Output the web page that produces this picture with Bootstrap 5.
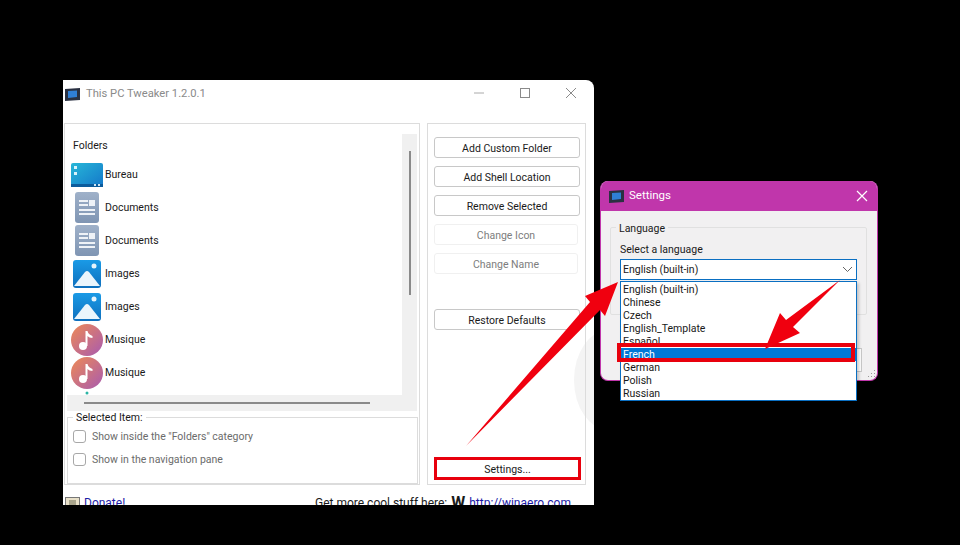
<!DOCTYPE html>
<html lang="en">
<head>
<meta charset="UTF-8">
<title>This PC Tweaker</title>
<link href="https://cdn.jsdelivr.net/npm/bootstrap@5.3.3/dist/css/bootstrap.min.css" rel="stylesheet">
<style>
body { background: #000; width: 960px; height: 545px; overflow: hidden; margin: 0; font-family: Roboto, "Liberation Sans", sans-serif; font-size: 10.5px; color: #1a1a1a; }
.win-main { position: absolute; left: 63px; top: 80px; width: 531px; height: 425px; background: #fff; overflow: hidden; border-top-right-radius: 8px; }
.win-title { height: 43px; padding: 7px 17px 0 2px; color: #8a8a8a; font-size: 11.2px; }
.title-left { gap: 6px; height: 14px; }
.win-controls { gap: 34px; height: 14px; margin-top: -1px; }
.left-box { width: 356px; height: 362px; margin-left: 1px; border: 1px solid #dcdcdc; padding-left: 2px; padding-right: 2px; }
.right-box { width: 159px; height: 362px; margin-left: 7px; border: 1px solid #dcdcdc; padding: 13px 6px 0; }
.list-wrap { height: 287px; position: relative; }
.list-white { width: 335px; height: 271px; padding: 14px 0 0 3px; overflow: hidden; }
.folder-head { height: 20px; padding-left: 3px; line-height: 15px; }
.folder-row { height: 33px; gap: 1px; flex: none; padding-top: 1px; }
.folder-ico { width: 34px; flex: none; display: flex; justify-content: center; margin-top: -1px; }
.vtrack { position: absolute; right: 0; top: 10px; width: 15px; height: 277px; background: #f0f0f0; }
.vthumb { margin: 17px 0 0 7px; width: 2px; height: 144px; background: #8a8a8a; }
.htrack { position: absolute; left: 0; bottom: 0; width: 350px; height: 16px; background: #f0f0f0; }
.hthumb { margin: 7px 0 0 17px; width: 286px; height: 2px; background: #8a8a8a; }
.sel-box { position: relative; height: 67px; margin-top: 6px; border: 1px solid #dcdcdc; padding: 12px 0 0 5px; width: 351px; color: #6b6b6b; }
.box-label { position: absolute; left: 5px; top: -7px; background: #fff; padding: 0 3px; color: #1a1a1a; line-height: 14px; }
.chk { width: 13px; height: 13px; border: 1px solid #a8a8a8; border-radius: 3px; flex: none; }
.chk-row { height: 13px; gap: 6px; margin-bottom: 10px; line-height: 13px; }
.tool-btn { height: 21px; border: 1px solid #c8c8c8; border-radius: 3px; margin-bottom: 8px; width: 146px; line-height: 21px; text-align: center; background: #fff; }
.tool-btn.off { border-color: #f0f0f0; color: #7d7d7d; width: 144px; }
.tool-gap { height: 27px; }
.settings-btn { margin-top: 127px; height: 23px; width: 147px; border: 3px solid #e8000d; line-height: 19px; text-align: center; }
.bottom-strip { height: 22px; padding: 13px 23px 0 2px; line-height: 14px; font-size: 12px; }
.bottom-strip a { color: #1a1aa6; }
.grey-arc { position: absolute; left: 511px; top: 250px; width: 70px; height: 100px; border-radius: 50%; background: #f4f4f4; }
.win-main > *:not(.grey-arc) { position: relative; }
.win-set { position: absolute; left: 600px; top: 181px; width: 278px; height: 200px; background: #f1f0f1; border: 1px solid #c036ab; border-top: 0; border-radius: 8px; overflow: hidden; }
.set-title { height: 30px; background: #c036ab; color: #fff; font-size: 11.5px; padding: 0 9px 0 8px; }
.set-name { gap: 5px; }
.lang-box { position: relative; margin: 16px 10px 0 9px; height: 88px; border: 1px solid #e0e0e0; border-radius: 2px; padding: 14px 9px 0; }
.lang-box .box-label { background: #f1f0f1; top: -6px; left: 5px; }
.lang-pick { margin-top: 1px; height: 21px; background: #fff; border: 1px solid #0a6fc2; padding: 0 3px 0 2px; line-height: 19px; }
.ok-piece { position: absolute; right: 15px; top: 167px; width: 80px; height: 24px; border: 1px solid #c8c8c8; background: #fff; }
.grip { position: absolute; right: 1px; bottom: 1px; }
.lang-list { position: absolute; left: 620px; top: 281px; width: 237px; height: 120px; background: #fff; border: 1px solid #0a6fc2; padding-top: 1px; line-height: 13px; box-shadow: 2px 2px 3px rgba(0,0,0,.2); }
.lang-item { height: 13px; padding-left: 2px; }
.lang-item.on { background: #0078d7; color: #fff; }
.red-frame { position: absolute; left: 617px; top: 343px; width: 238px; height: 19px; border: 4px solid #e8000d; }
.arrows { position: absolute; left: 0; top: 0; }
</style>
</head>
<body>

<svg width="0" height="0" class="position-absolute">
  <defs>
    <linearGradient id="g-desk" x1="0" y1="0" x2="1" y2="1"><stop offset="0" stop-color="#27b7d8"/><stop offset="1" stop-color="#1477c9"/></linearGradient>
    <linearGradient id="g-doc" x1="0" y1="0" x2="0" y2="1"><stop offset="0" stop-color="#9fb1c9"/><stop offset="1" stop-color="#7f95b3"/></linearGradient>
    <linearGradient id="g-img" x1="0" y1="0" x2="0" y2="1"><stop offset="0" stop-color="#1a9ae6"/><stop offset="1" stop-color="#0e6fbd"/></linearGradient>
    <linearGradient id="g-mus" x1="0" y1="0" x2="1" y2="1"><stop offset="0" stop-color="#ee8a55"/><stop offset="1" stop-color="#a85ab0"/></linearGradient>
    <symbol id="i-desk" viewBox="0 0 32 24"><rect width="32" height="24" rx="2" fill="url(#g-desk)"/><rect y="21" width="32" height="3" fill="#0c5c9c"/><rect x="3" y="3" width="3" height="3" fill="#d8f3fb"/><rect x="3" y="9" width="3" height="3" fill="#d8f3fb"/><rect x="23" y="21" width="2" height="2" fill="#cfe6f4"/><rect x="27" y="21" width="2" height="2" fill="#cfe6f4"/></symbol>
    <symbol id="i-doc" viewBox="0 0 24 31"><rect width="24" height="31" rx="3" fill="url(#g-doc)"/><path d="M4 9h9M4 13h9M4 18h16M4 22h16" stroke="#eef2f7" stroke-width="2"/><rect x="14" y="8" width="6" height="6" fill="#eef2f7"/></symbol>
    <symbol id="i-img" viewBox="0 0 28 28"><rect width="28" height="28" rx="3" fill="url(#g-img)"/><circle cx="21" cy="6" r="2.500" fill="#e6f4fc"/><path d="M1 26 12 12Q14 10 16 12L27 26Z" fill="#eaf5fc"/></symbol>
    <symbol id="i-mus" viewBox="0 0 32 32"><circle cx="16" cy="16" r="16" fill="url(#g-mus)"/><circle cx="12" cy="22" r="4" fill="#fff"/><path d="M14.500 22V7h2c.5 3 3 4 5 5v2c-2 0-4-1-5-2v10Z" fill="#fff"/></symbol>
    <symbol id="i-app" viewBox="0 0 15 13"><path d="M0 1 15 0V12L0 13Z" fill="#2a3142"/><path d="M3 3 12 2.500V9L3 10Z" fill="#2f7fd6"/></symbol>
  </defs>
</svg>

<div class="win-main">
  <div class="grey-arc"></div>
  <div class="win-title d-flex align-items-start justify-content-between">
    <div class="title-left d-flex align-items-center">
      <svg width="15" height="13"><use href="#i-app"/></svg>
      <span>This PC Tweaker 1.2.0.1</span>
    </div>
    <div class="win-controls d-flex align-items-center">
      <svg width="12" height="12" viewBox="0 0 12 12"><path d="M1 6h10" stroke="#aaa"/></svg>
      <svg width="12" height="12" viewBox="0 0 12 12"><rect x="1.500" y="1.500" width="9" height="9" fill="none" stroke="#8a8a8a"/></svg>
      <svg width="12" height="12" viewBox="0 0 12 12"><path d="M1 1l10 10M11 1 1 11" stroke="#8a8a8a"/></svg>
    </div>
  </div>
  <div class="d-flex">
    <div class="left-box">
      <div class="list-wrap">
        <div class="list-white">
          <div class="folder-head">Folders</div>
          <div class="folder-row d-flex align-items-center"><span class="folder-ico"><svg width="32" height="24"><use href="#i-desk"/></svg></span>Bureau</div>
          <div class="folder-row d-flex align-items-center"><span class="folder-ico"><svg width="24" height="31"><use href="#i-doc"/></svg></span>Documents</div>
          <div class="folder-row d-flex align-items-center"><span class="folder-ico"><svg width="24" height="31"><use href="#i-doc"/></svg></span>Documents</div>
          <div class="folder-row d-flex align-items-center"><span class="folder-ico"><svg width="28" height="28"><use href="#i-img"/></svg></span>Images</div>
          <div class="folder-row d-flex align-items-center"><span class="folder-ico"><svg width="28" height="28"><use href="#i-img"/></svg></span>Images</div>
          <div class="folder-row d-flex align-items-center"><span class="folder-ico"><svg width="32" height="32"><use href="#i-mus"/></svg></span>Musique</div>
          <div class="folder-row d-flex align-items-center"><span class="folder-ico"><svg width="32" height="32"><use href="#i-mus"/></svg></span>Musique</div>
          <div class="folder-row d-flex align-items-center"><span class="folder-ico"><svg width="4" height="30"><circle cx="2" cy="2" r="1.500" fill="#2bb5a5"/></svg></span></div>
        </div>
        <div class="vtrack"><div class="vthumb"></div></div>
        <div class="htrack"><div class="hthumb"></div></div>
      </div>
      <div class="sel-box">
        <span class="box-label">Selected Item:</span>
        <div class="chk-row d-flex"><span class="chk"></span>Show inside the "Folders" category</div>
        <div class="chk-row d-flex"><span class="chk"></span>Show in the navigation pane</div>
      </div>
    </div>
    <div class="right-box">
      <div class="tool-btn">Add Custom Folder</div>
      <div class="tool-btn">Add Shell Location</div>
      <div class="tool-btn">Remove Selected</div>
      <div class="tool-btn off">Change Icon</div>
      <div class="tool-btn off">Change Name</div>
      <div class="tool-gap"></div>
      <div class="tool-btn">Restore Defaults</div>
      <div class="settings-btn">Settings...</div>
    </div>
  </div>
  <div class="bottom-strip d-flex justify-content-between">
    <div class="d-flex align-items-center gap-1">
      <svg width="15" height="12" viewBox="0 0 15 12"><rect x=".5" y=".5" width="14" height="11" fill="#e8e0c8" stroke="#777"/><rect x="4" y="3" width="7" height="6" fill="#a9a58c"/></svg>
      <a href="#">Donate!</a>
    </div>
    <div class="d-flex align-items-center gap-1">
      <span>Get more cool stuff here:</span>
      <b class="fs-6 lh-1">W</b>
      <a href="#">http://winaero.com</a>
    </div>
  </div>
</div>

<div class="win-set">
  <div class="set-title d-flex align-items-center justify-content-between">
    <div class="set-name d-flex align-items-center">
      <svg width="15" height="13"><use href="#i-app"/></svg>
      <span>Settings</span>
    </div>
    <svg width="12" height="12" viewBox="0 0 12 12"><path d="M1 1l10 10M11 1 1 11" stroke="#fff" stroke-width="1.200"/></svg>
  </div>
  <div class="lang-box">
    <span class="box-label">Language</span>
    <div>Select a language</div>
    <div class="lang-pick d-flex align-items-center justify-content-between">
      <span>English (built-in)</span>
      <svg width="11" height="7" viewBox="0 0 11 7"><path d="M1 1l4.500 4.500L10 1" fill="none" stroke="#666"/></svg>
    </div>
  </div>
  <div class="ok-piece"></div>
  <svg class="grip" width="10" height="10" viewBox="0 0 10 10"><path d="M8 1h1v1H8zM5 4h1v1H5zM8 4h1v1H8zM2 7h1v1H2zM5 7h1v1H5zM8 7h1v1H8z" fill="#999"/></svg>
</div>

<div class="lang-list">
  <div class="lang-item">English (built-in)</div>
  <div class="lang-item">Chinese</div>
  <div class="lang-item">Czech</div>
  <div class="lang-item">English_Template</div>
  <div class="lang-item">Español</div>
  <div class="lang-item on">French</div>
  <div class="lang-item">German</div>
  <div class="lang-item">Polish</div>
  <div class="lang-item">Russian</div>
</div>
<div class="red-frame"></div>

<svg class="arrows" width="960" height="545" viewBox="0 0 960 545">
  <path d="M466 446 590 302 585 296 618 282 605 316 600 310Z" fill="#f0000f"/>
  <path d="M840 280 793 327 800 333 765 349 780 313 786 320Z" fill="#f0000f"/>
</svg>

</body>
</html>
